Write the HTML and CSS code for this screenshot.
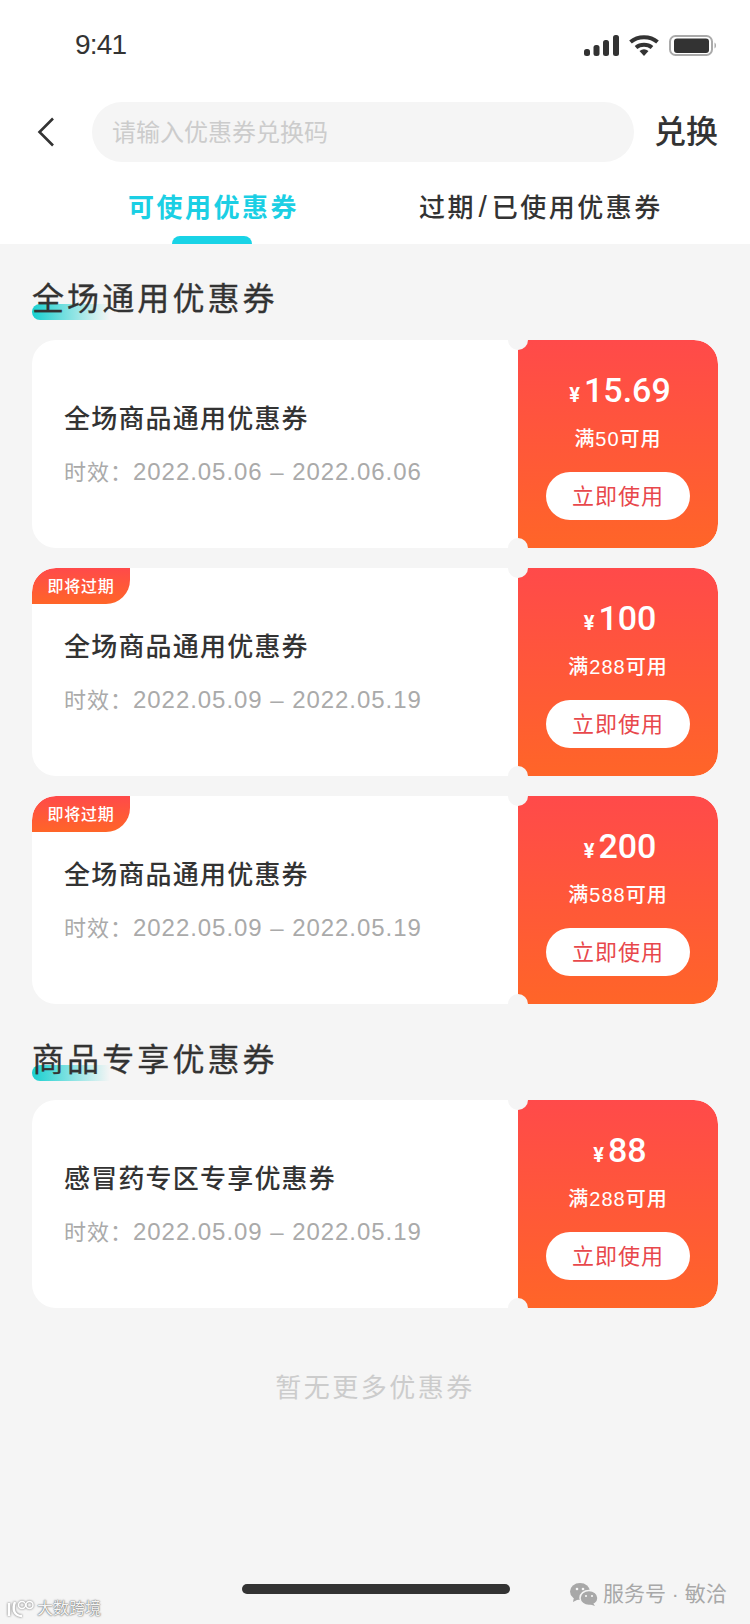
FILE: index.html
```html
<!DOCTYPE html>
<html lang="zh-CN">
<head>
<meta charset="utf-8">
<title>优惠券</title>
<link rel="stylesheet" href="styles.css">
</head>
<body>
<div class="page">
  <header class="top">
    <div class="status">
      <span class="time">9:41</span>
      <div class="status-icons">
        <svg class="ic-signal" width="35" height="21" viewBox="0 0 35 21"><rect x="0" y="14" width="6" height="7" rx="2.500"/><rect x="9.500" y="10" width="6" height="11" rx="2.500"/><rect x="19" y="5" width="6" height="16" rx="2.500"/><rect x="29" y="0" width="6" height="21" rx="2.500"/></svg>
        <svg class="ic-wifi" width="30" height="21" viewBox="0 0 30 21"><path d="M1.500 7C9 0.500 21 0.500 28.500 7" fill="none" stroke="#333" stroke-width="4"/><path d="M7 12.500C11.500 8.700 18.500 8.700 23 12.500" fill="none" stroke="#333" stroke-width="4"/><path d="M10.500 16C13.500 13.800 16.500 13.800 19.500 16L15 21Z" fill="#333"/></svg>
        <svg class="ic-battery" width="48" height="21" viewBox="0 0 48 21"><rect x="1" y="1" width="42" height="19" rx="5.500" fill="none" stroke="#aaa" stroke-width="2"/><rect x="5" y="3.500" width="35" height="14.500" rx="3" fill="#333"/><path d="M45.500 7.500C47.500 8.500 47.500 12.500 45.500 13.500Z" fill="#aaa"/></svg>
      </div>
    </div>
    <div class="search-row">
      <svg class="back" width="18" height="30" viewBox="0 0 18 30"><path d="M16 1.500L2.500 15L16 28.500" fill="none" stroke="#333" stroke-width="2.600"/></svg>
      <div class="search-box">请输入优惠券兑换码</div>
      <span class="redeem">兑换</span>
    </div>
    <nav class="tabs">
      <div class="tab tab-active">可使用优惠券<i class="tab-bar"></i></div>
      <div class="tab">过期<span class="tab-sep">/</span>已使用优惠券</div>
    </nav>
  </header>

  <main class="content">
    <h2 class="section-title first"><i class="title-mark"></i><span class="title-text">全场通用优惠券</span></h2>
    <div class="coupon-list">
      <article class="coupon">
        <div class="coupon-info">
          <div class="coupon-name">全场商品通用优惠券</div>
          <div class="coupon-date"><span class="date-label">时效：</span>2022.05.06 – 2022.06.06</div>
        </div>
        <div class="coupon-side">
          <div class="price"><span class="yen">¥</span>15.69</div>
          <div class="limit">满50可用</div>
          <div class="use-btn">立即使用</div>
        </div>
      </article>
      <article class="coupon">
        <span class="tag">即将过期</span>
        <div class="coupon-info">
          <div class="coupon-name">全场商品通用优惠券</div>
          <div class="coupon-date"><span class="date-label">时效：</span>2022.05.09 – 2022.05.19</div>
        </div>
        <div class="coupon-side">
          <div class="price"><span class="yen">¥</span>100</div>
          <div class="limit">满288可用</div>
          <div class="use-btn">立即使用</div>
        </div>
      </article>
      <article class="coupon">
        <span class="tag">即将过期</span>
        <div class="coupon-info">
          <div class="coupon-name">全场商品通用优惠券</div>
          <div class="coupon-date"><span class="date-label">时效：</span>2022.05.09 – 2022.05.19</div>
        </div>
        <div class="coupon-side">
          <div class="price"><span class="yen">¥</span>200</div>
          <div class="limit">满588可用</div>
          <div class="use-btn">立即使用</div>
        </div>
      </article>
    </div>

    <h2 class="section-title second"><i class="title-mark"></i><span class="title-text">商品专享优惠券</span></h2>
    <div class="coupon-list">
      <article class="coupon">
        <div class="coupon-info">
          <div class="coupon-name">感冒药专区专享优惠券</div>
          <div class="coupon-date"><span class="date-label">时效：</span>2022.05.09 – 2022.05.19</div>
        </div>
        <div class="coupon-side">
          <div class="price"><span class="yen">¥</span>88</div>
          <div class="limit">满288可用</div>
          <div class="use-btn">立即使用</div>
        </div>
      </article>
    </div>
    <p class="no-more">暂无更多优惠券</p>
  </main>

  <div class="home-bar"></div>
  <div class="wm-right">
    <svg width="28" height="23" viewBox="0 0 28 23"><ellipse cx="10" cy="8.500" rx="10" ry="8.500" fill="#a8a8a8"/><path d="M4 14l-1 5 6-3z" fill="#a8a8a8"/><ellipse cx="19" cy="15" rx="9" ry="7.500" fill="#a8a8a8" stroke="#f5f5f5" stroke-width="1.500"/><path d="M23 20l2 3-6-2z" fill="#a8a8a8"/><circle cx="7" cy="6" r="1.300" fill="#f5f5f5"/><circle cx="13" cy="6" r="1.300" fill="#f5f5f5"/><circle cx="16" cy="13" r="1.100" fill="#f5f5f5"/><circle cx="22" cy="13" r="1.100" fill="#f5f5f5"/></svg>
    <span>服务号 · 敏洽</span>
  </div>
  <div class="wm-left">
    <svg class="wm-logo" width="27" height="18" viewBox="0 0 27 18"><path d="M2 3v13M8 2c-3 7-1 14 7 14" fill="none" stroke="#fff" stroke-width="2.500"/><circle cx="15" cy="5" r="3.500" fill="none" stroke="#fff" stroke-width="1.500"/><circle cx="22.500" cy="5" r="3.500" fill="none" stroke="#fff" stroke-width="1.500"/></svg>
    <span>大数跨境</span>
  </div>
</div>
</body>
</html>
```
FILE: styles.css
```css
* { box-sizing: border-box; }
html, body { margin: 0; padding: 0; }
body {
  font-family: "Liberation Sans", "Noto Sans CJK SC", sans-serif;
  background: #f5f5f5;
  color: #333;
}
.page {
  position: relative;
  width: 750px;
  height: 1624px;
  overflow: hidden;
  background: #f5f5f5;
}
.top {
  background: #fff;
  height: 244px;
}
.status {
  height: 88px;
  padding: 2px 33px 0 75px;
  display: flex;
  align-items: center;
  justify-content: space-between;
}
.time {
  font-size: 28px;
  letter-spacing: -0.800px;
  color: #333;
}
.status-icons {
  display: flex;
  align-items: center;
  gap: 10px;
}
.ic-signal { fill: #333; }
.search-row {
  margin-top: 14px;
  height: 60px;
  display: flex;
  align-items: center;
  padding: 0 32px 0 37px;
}
.back { flex: none; }
.search-box {
  margin-left: 37px;
  width: 542px;
  height: 60px;
  border-radius: 30px;
  background: #f5f5f5;
  color: #ccc;
  font-size: 24px;
  line-height: 62px;
  padding-left: 20px;
}
.redeem {
  margin-left: auto;
  margin-bottom: 6px;
  font-size: 32px;
  font-weight: 500;
  color: #333;
}
.tabs {
  position: relative;
  height: 82px;
}
.tab {
  position: absolute;
  top: 26px;
  left: 419px;
  font-size: 26px;
  font-weight: 500;
  line-height: 40px;
  letter-spacing: 2.500px;
  color: #333;
  white-space: nowrap;
}
.tab-sep {
  margin: 0 2.500px;
  font-size: 30px;
  font-weight: 400;
  line-height: 30px;
}
.tab-active {
  left: 128px;
  color: #1bcfe4;
  font-weight: 700;
}
.tab-bar {
  position: absolute;
  left: 44px;
  top: 48px;
  width: 80px;
  height: 8px;
  border-radius: 8px 8px 0 0;
  background: #19d3e6;
}
.content { padding: 0 32px; }
.section-title {
  position: relative;
  margin: 0 0 20px;
  height: 44px;
  font-size: 32px;
  font-weight: 400;
  -webkit-text-stroke: 0.3px #333;
  line-height: 46px;
  letter-spacing: 3.100px;
  color: #333;
}
.section-title.first { margin-top: 32px; }
.section-title.second { margin-top: 33px; margin-bottom: 19px; }
.title-text { position: relative; }
.title-mark {
  position: absolute;
  left: 0;
  bottom: 0;
  width: 78px;
  height: 16px;
  border-radius: 8px 0 0 8px;
  background: linear-gradient(90deg, #19d0d0, rgba(25, 208, 208, 0));
}
.coupon-list {
  display: flex;
  flex-direction: column;
  gap: 20px;
}
.coupon {
  position: relative;
  display: flex;
  height: 208px;
  border-radius: 24px;
  background: #fff;
  overflow: hidden;
}
.coupon::before, .coupon::after {
  content: "";
  position: absolute;
  left: 476px;
  width: 20px;
  height: 20px;
  border-radius: 50%;
  background: #f5f5f5;
  z-index: 2;
}
.coupon::before { top: -10px; }
.coupon::after { bottom: -10px; }
.tag {
  position: absolute;
  left: 0;
  top: 0;
  width: 98px;
  height: 36px;
  border-radius: 24px 0 24px 0;
  background: linear-gradient(180deg, #ff4a4a, #ff6528);
  color: #fff;
  font-size: 16px;
  font-weight: 500;
  line-height: 38px;
  text-align: center;
  letter-spacing: 0.800px;
}
.coupon-info {
  width: 486px;
  flex: none;
  padding: 4px 0 0 32px;
  display: flex;
  flex-direction: column;
  justify-content: center;
  gap: 13px;
}
.coupon-name {
  font-size: 26px;
  font-weight: 500;
  line-height: 40px;
  letter-spacing: 1.200px;
  color: #333;
}
.coupon-date {
  font-size: 24px;
  line-height: 40px;
  letter-spacing: 0.950px;
  color: #aaa;
  white-space: nowrap;
}
.date-label {
  font-size: 22px;
  letter-spacing: 1px;
}
.coupon-side {
  flex: 1;
  background: linear-gradient(180deg, #ff4a4a, #ff6528);
  border-radius: 0 24px 24px 0;
  display: flex;
  flex-direction: column;
  align-items: center;
  color: #fff;
  padding-top: 28px;
}
.price {
  margin-left: 4px;
  font-family: "Roboto", "Liberation Sans", sans-serif;
  font-size: 34px;
  line-height: 44px;
  font-weight: 500;
  white-space: nowrap;
}
.yen {
  font-size: 20px;
  font-weight: 700;
  margin-right: 4px;
}
.limit {
  margin-top: 6px;
  font-size: 20px;
  line-height: 32px;
  font-weight: 500;
  letter-spacing: 1px;
}
.use-btn {
  margin-top: 17px;
  width: 144px;
  height: 48px;
  border-radius: 24px;
  background: #fff;
  color: #e8484c;
  font-size: 22px;
  line-height: 50px;
  text-align: center;
  letter-spacing: 1px;
}
.no-more {
  margin: 60px 0 0;
  text-align: center;
  font-size: 26px;
  line-height: 40px;
  letter-spacing: 2.500px;
  color: #ccc;
}
.home-bar {
  position: absolute;
  left: 242px;
  top: 1584px;
  width: 268px;
  height: 10px;
  border-radius: 5px;
  background: #333;
}
.wm-right {
  position: absolute;
  left: 570px;
  top: 1581px;
  display: flex;
  align-items: center;
  gap: 5px;
  color: #a8a8a8;
  font-size: 21px;
  line-height: 26px;
}
.wm-left {
  position: absolute;
  left: 7px;
  top: 1599px;
  display: flex;
  align-items: center;
  gap: 3px;
  color: #f5f5f5;
  font-size: 16px;
  line-height: 20px;
  text-shadow: 0 0 2px #666, 0 0 1px #666;
}
.wm-logo {
  filter: drop-shadow(0 0 1px #666);
}
```
